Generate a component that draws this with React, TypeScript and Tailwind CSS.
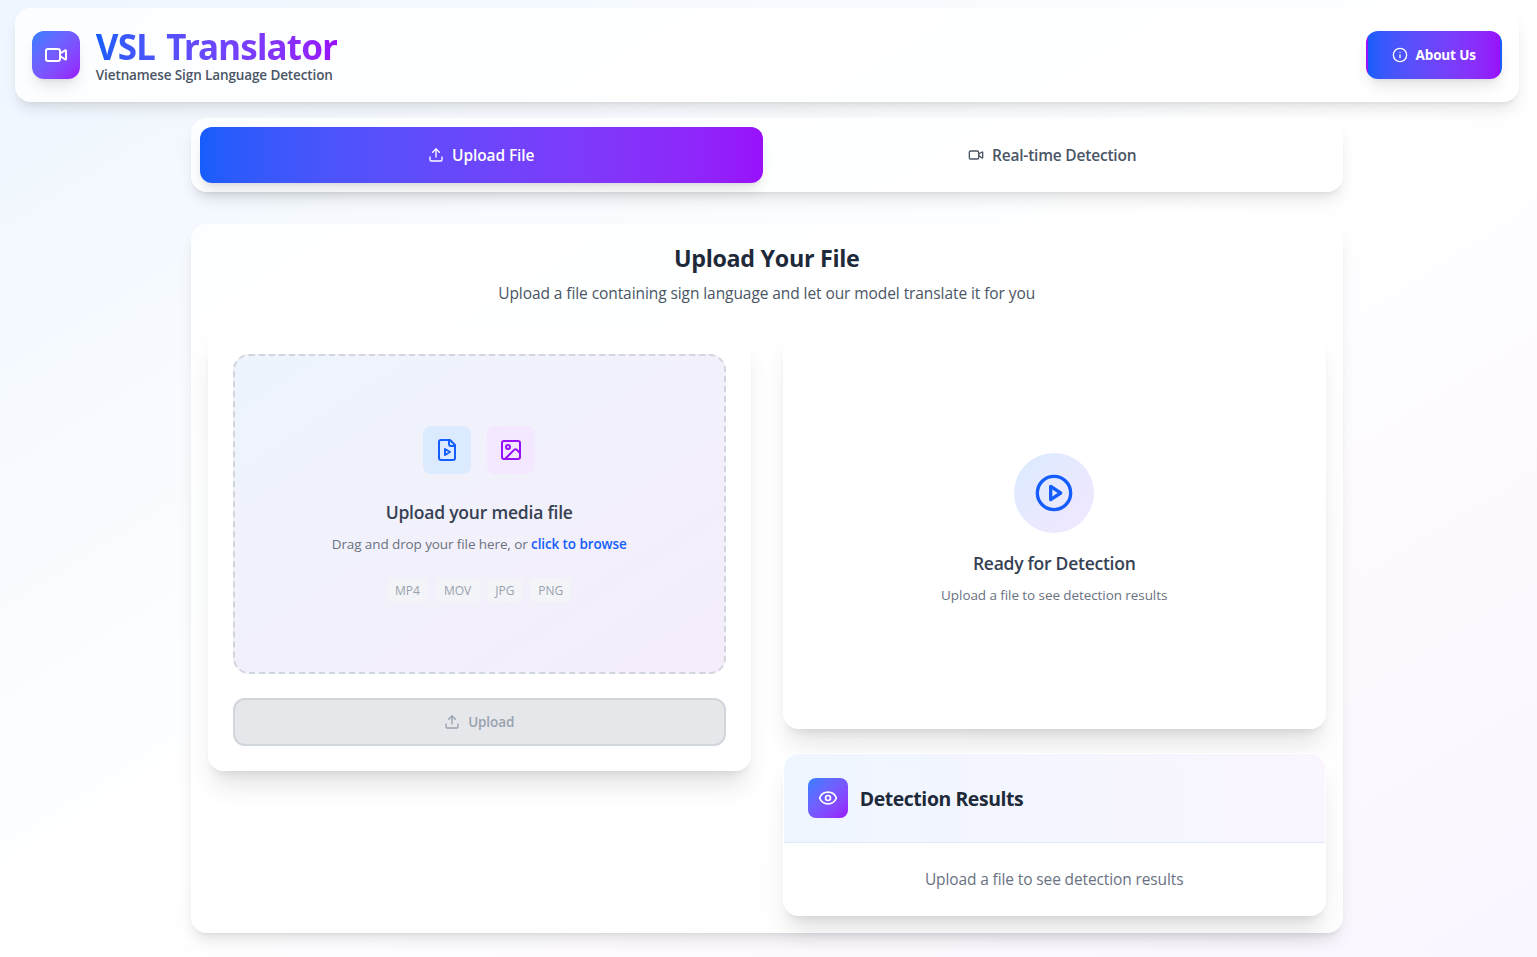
import type { ReactNode } from "react";
import { Eye, Image, Info, Upload, Video } from "lucide-react";

const formats = ["MP4", "MOV", "JPG", "PNG"];

function StrokeIcon({ className, children }: { className: string; children: ReactNode }) {
  return (
    <svg
      className={className}
      viewBox="0 0 24 24"
      fill="none"
      stroke="currentColor"
      strokeWidth="2"
      strokeLinecap="round"
      strokeLinejoin="round"
    >
      {children}
    </svg>
  );
}

function FilePlayIcon() {
  return (
    <StrokeIcon className="size-6">
      <path d="M15 2H6a2 2 0 0 0-2 2v16a2 2 0 0 0 2 2h12a2 2 0 0 0 2-2V7Z" />
      <path d="M14 2v4a2 2 0 0 0 2 2h4" />
      <path d="m10 11 5 3-5 3v-6Z" />
    </StrokeIcon>
  );
}

function CirclePlayIcon() {
  return (
    <StrokeIcon className="size-10">
      <circle cx="12" cy="12" r="10" />
      <polygon points="10 8 16 12 10 16 10 8" />
    </StrokeIcon>
  );
}

function Header() {
  return (
    <header className="mx-[14.8px] flex items-center justify-between rounded-2xl border border-white/20 bg-white/80 p-4 shadow-lg">
      <div className="flex items-center gap-4">
        <div className="flex size-12 items-center justify-center rounded-xl bg-gradient-to-br from-blue-500 to-purple-600 text-white shadow-lg">
          <Video size={24} />
        </div>
        <div>
          <h1 className="w-fit bg-gradient-to-r from-blue-600 to-purple-600 bg-clip-text pt-1 font-['Noto_Sans'] text-[35px] leading-9 font-bold tracking-[-0.8px] text-transparent [word-spacing:3px]">
            VSL Translator
          </h1>
          <p className="text-[13.5px] leading-5 font-semibold tracking-[-0.11px] text-gray-600">
            Vietnamese Sign Language Detection
          </p>
        </div>
      </div>
      <button className="flex h-12 w-[136px] items-center gap-2 rounded-xl border-2 border-transparent bg-gradient-to-r from-blue-600 to-purple-600 pl-6 text-[13.5px] font-bold tracking-[-0.15px] whitespace-nowrap text-white shadow-lg">
        <Info size={16} />
        About Us
      </button>
    </header>
  );
}

function Tabs() {
  return (
    <nav className="flex gap-2 rounded-2xl border border-white/20 bg-white/80 p-2 shadow-lg">
      <button className="flex h-14 flex-1 items-center justify-center gap-2 rounded-xl bg-gradient-to-r from-blue-600 to-purple-600 text-[15.5px] font-semibold tracking-[-0.1px] text-white shadow-lg">
        <Upload size={16} />
        <span className="pt-0.5">Upload File</span>
      </button>
      <button className="flex h-14 flex-1 items-center justify-center gap-2 rounded-xl text-[15.5px] font-semibold tracking-[-0.2px] text-gray-600">
        <Video size={16} />
        <span className="pt-0.5">Real-time Detection</span>
      </button>
    </nav>
  );
}

function UploadPanel() {
  return (
    <section className="rounded-2xl border border-white/20 bg-white/80 p-6 shadow-xl">
      <div className="flex h-80 flex-col items-center justify-center rounded-2xl border-2 border-dashed border-gray-300 bg-gradient-to-br from-[#edf4fd] via-[#f2f1fb] to-[#f5edfa]">
        <div className="flex gap-4">
          <div className="flex size-12 items-center justify-center rounded-lg bg-blue-100 text-blue-600">
            <FilePlayIcon />
          </div>
          <div className="flex size-12 items-center justify-center rounded-lg bg-purple-100 text-purple-600">
            <Image size={24} />
          </div>
        </div>
        <h3 className="mt-6 text-[17.5px] leading-7 font-semibold tracking-[-0.21px] text-gray-700">
          Upload your media file
        </h3>
        <p className="mt-2 text-[13.5px] leading-5 tracking-[-0.1px] text-gray-500">
          Drag and drop your file here, or{" "}
          <span className="font-semibold tracking-[-0.1px] text-blue-600">click to browse</span>
        </p>
        <div className="mt-6 flex gap-2">
          {formats.map((format) => (
            <span key={format} className="rounded bg-[#f3f4f7] px-2 pt-[5px] pb-[3px] text-xs text-gray-400">
              {format}
            </span>
          ))}
        </div>
      </div>
      <button
        disabled
        className="mt-6 flex h-12 w-full items-center justify-center gap-2 rounded-xl border-2 border-gray-300 bg-gray-200 text-[13.5px] font-semibold tracking-[-0.1px] text-gray-400"
      >
        <Upload size={16} />
        Upload
      </button>
    </section>
  );
}

function PreviewPanel() {
  return (
    <section className="flex h-[400px] flex-col items-center justify-center rounded-2xl border border-white/20 bg-white/80 shadow-xl">
      <div className="flex size-20 items-center justify-center rounded-full bg-gradient-to-br from-blue-100 to-purple-100 text-blue-600">
        <CirclePlayIcon />
      </div>
      <h3 className="mt-4 text-[17.5px] leading-7 font-semibold tracking-[-0.26px] text-gray-700">
        Ready for Detection
      </h3>
      <p className="mt-2 text-[13.5px] leading-5 tracking-[-0.08px] text-gray-500">
        Upload a file to see detection results
      </p>
    </section>
  );
}

function ResultsPanel() {
  return (
    <section className="overflow-hidden rounded-2xl border border-white/20 bg-white/80 shadow-xl">
      <div className="flex items-center gap-3 border-b border-blue-100 bg-gradient-to-r from-blue-50 to-purple-50 p-6">
        <div className="flex size-10 items-center justify-center rounded-lg bg-gradient-to-br from-blue-500 to-purple-600 text-white">
          <Eye size={20} />
        </div>
        <h3 className="pt-0.5 text-[19.4px] leading-7 font-bold tracking-[-0.4px] text-gray-800">
          Detection Results
        </h3>
      </div>
      <p className="p-6 text-center text-[15.5px] leading-6 tracking-[-0.12px] text-gray-500">
        Upload a file to see detection results
      </p>
    </section>
  );
}

export default function App() {
  return (
    <div className="h-[957px] overflow-hidden bg-gradient-to-br from-blue-50 via-white to-purple-50 pt-2 font-['Open_Sans',sans-serif]">
      <div className="w-[1533.4px]">
        <Header />
        <main className="mx-auto mt-4 w-6xl">
          <Tabs />
          <div className="mt-8 rounded-2xl border border-white/20 bg-white/80 p-4 shadow-lg">
            <div className="mb-6 text-center">
              <h2 className="-mb-px pt-px text-[23.3px] leading-8 font-bold tracking-[-0.3px] text-gray-800">
                Upload Your File
              </h2>
              <p className="mt-2 text-[15.5px] leading-6 tracking-[-0.08px] text-gray-600">
                Upload a file containing sign language and let our model translate it for you
              </p>
            </div>
            <div className="grid grid-cols-2 items-start gap-8">
              <UploadPanel />
              <div className="flex flex-col gap-6">
                <PreviewPanel />
                <ResultsPanel />
              </div>
            </div>
          </div>
        </main>
      </div>
    </div>
  );
}
